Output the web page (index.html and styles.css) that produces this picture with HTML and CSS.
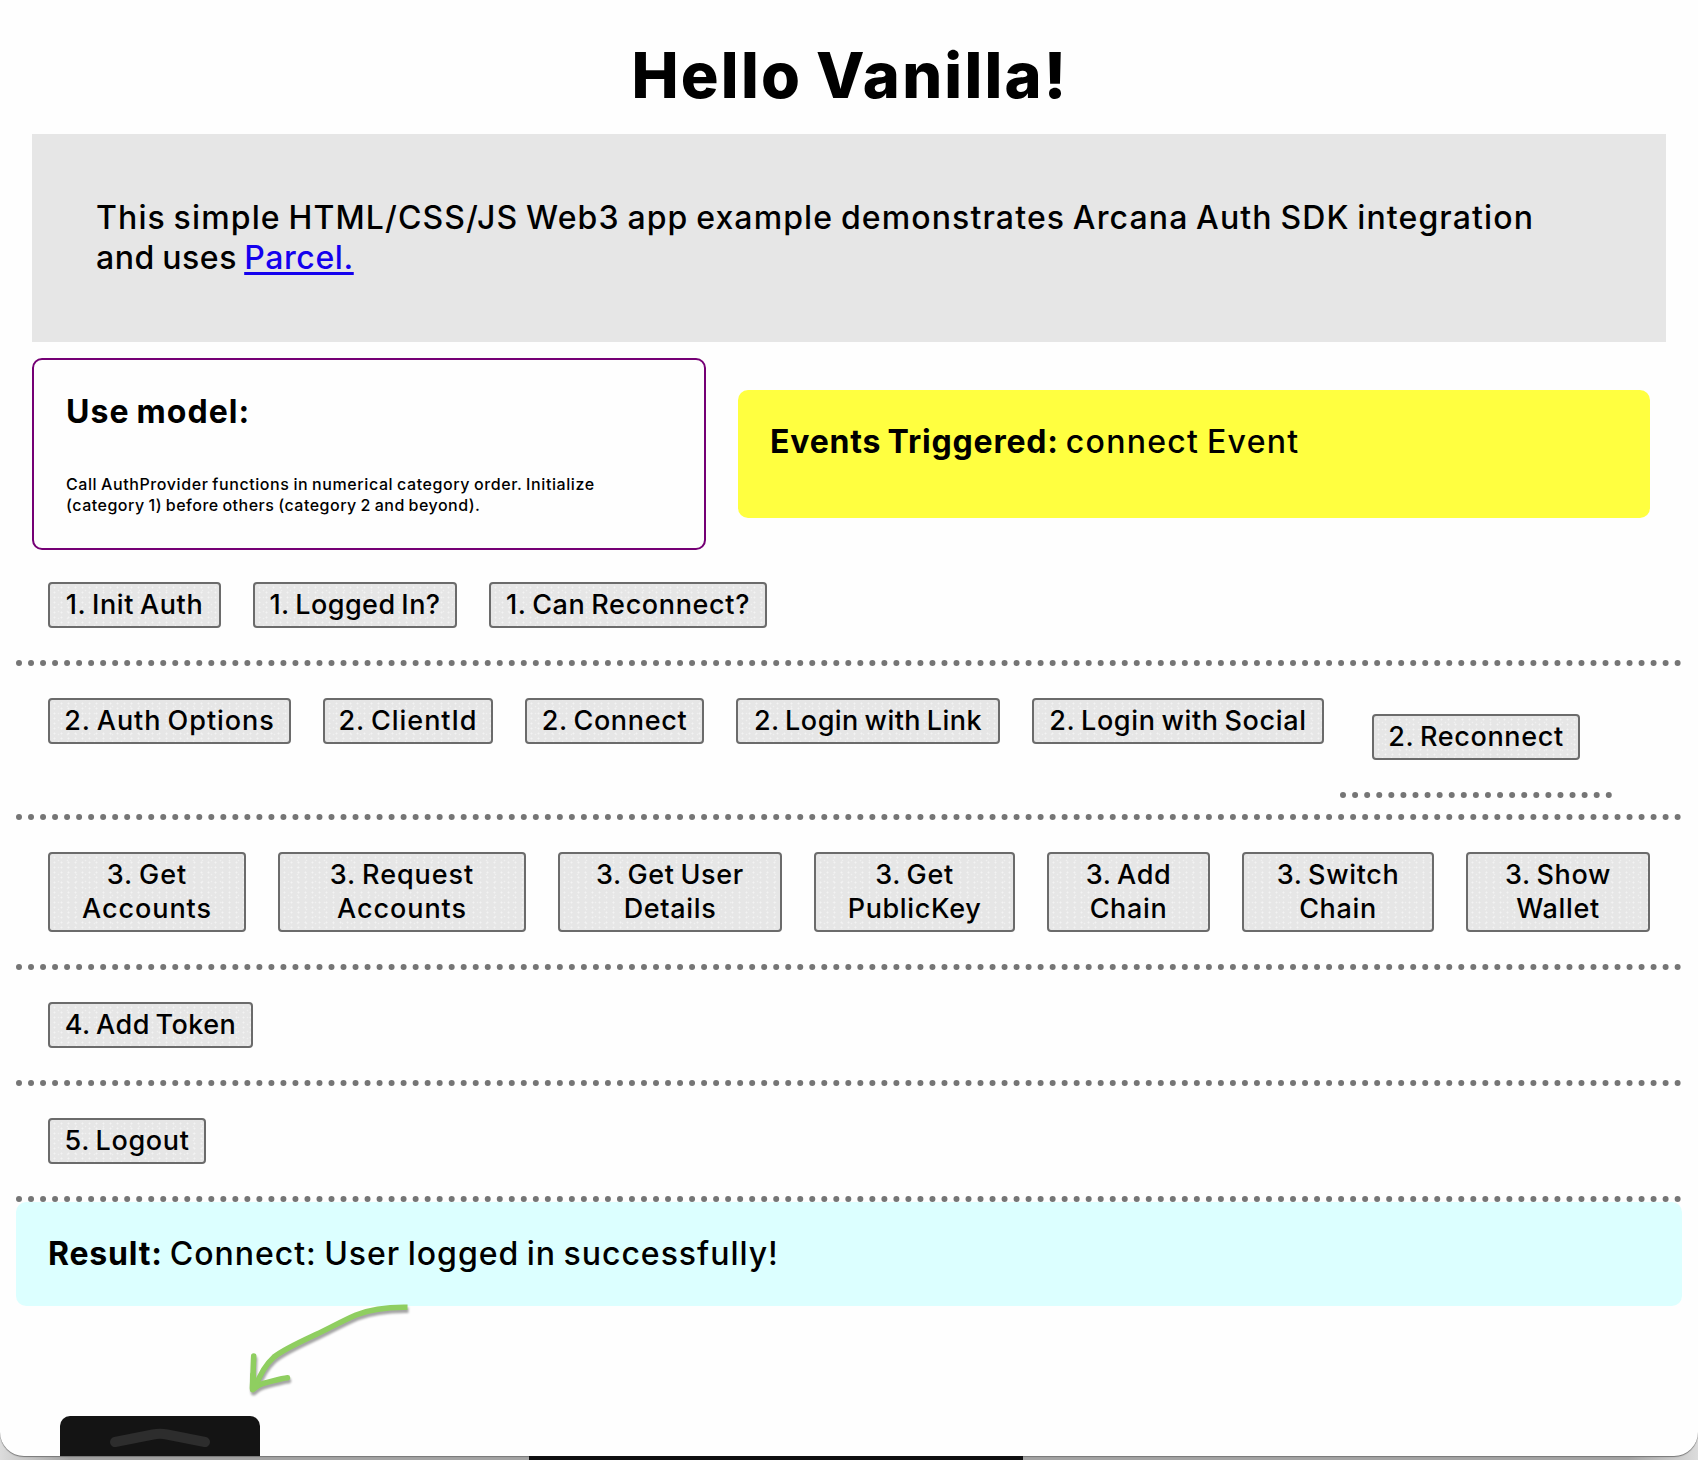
FILE: index.html
```html
<!DOCTYPE html>
<html lang="en">
<head>
<meta charset="utf-8">
<title>Hello Vanilla!</title>
<link rel="stylesheet" href="styles.css">
</head>
<body>
<main class="window">
  <h1 class="title">Hello Vanilla!</h1>
  <p class="intro">This simple HTML/CSS/JS Web3 app example demonstrates Arcana Auth SDK integration<br><span class="intro-end">and uses <a href="#">Parcel.</a></span></p>
  <div class="info">
    <section class="model">
      <h2>Use model:</h2>
      <p>Call AuthProvider functions in numerical category order. Initialize<br><span class="second">(category 1) before others (category 2 and beyond).</span></p>
    </section>
    <section class="events"><b>Events Triggered:</b><span>connect Event</span></section>
  </div>
  <div class="row">
    <button class="w173">1. Init Auth</button>
    <button class="w204 snug">1. Logged In?</button>
    <button class="w278">1. Can Reconnect?</button>
  </div>
  <div class="row row-nested">
    <button class="w243 loose">2. Auth Options</button>
    <button class="w170 loose">2. ClientId</button>
    <button class="w179">2. Connect</button>
    <button class="w264 snug">2. Login with Link</button>
    <button class="w292">2. Login with Social</button>
    <div class="row nested"><button class="w208">2. Reconnect</button></div>
  </div>
  <div class="row">
    <button class="w198 loose">3. Get<br>Accounts</button>
    <button class="w248 loose">3. Request<br>Accounts</button>
    <button class="w224">3. Get User<br>Details</button>
    <button class="w201">3. Get<br>PublicKey</button>
    <button class="w163">3. Add<br>Chain</button>
    <button class="w192">3. Switch<br>Chain</button>
    <button class="w184">3. Show<br>Wallet</button>
  </div>
  <div class="row"><button class="w205 snug">4. Add Token</button></div>
  <div class="row"><button class="w158">5. Logout</button></div>
  <section class="result"><b>Result:</b><span>Connect: User logged in successfully!</span></section>
  <svg class="arrow" width="190" height="120" viewBox="230 1290 190 120" fill="none" stroke="#8fce60" stroke-linecap="round" stroke-linejoin="round">
    <path stroke-width="5.500" stroke-linecap="butt" d="M407.500 1307.300C389 1307 370 1309.500 356 1315C342 1321 329 1328.500 317 1334C301 1341.500 284 1349 274 1357C264 1366 259 1377 255.500 1387"/>
    <path stroke-width="5.500" d="M253.700 1356L252.500 1388L263 1383.500C272 1381.500 280 1378.500 287.500 1377.700"/>
    <path stroke-width="6" d="M253 1375L252.800 1389.500L257 1386"/>
  </svg>
  <div class="wallet-tab">
    <svg width="120" height="30" viewBox="0 0 120 30" fill="none" stroke="#2d2d2d" stroke-width="10" stroke-linecap="round" stroke-linejoin="round"><path d="M15 16L53 8.500Q60 7 67 8.500L105 16"/></svg>
  </div>
</main>
<div class="dock"></div>
</body>
</html>
```
FILE: styles.css
```css
* { box-sizing: border-box; }
html { background: #a3a3a3; }
body {
  margin: 0;
  height: 1460px;
  overflow: hidden;
  font: 450 32px/40px Inter, "Liberation Sans", sans-serif;
  word-spacing: -2px;
  color: #000;
  background: linear-gradient(90deg, #dcdcdc 0, #a3a3a3 70px, #a3a3a3 1628px, #dcdcdc 100%);
}
.window {
  position: relative;
  height: 1456px;
  padding: 0 16px;
  background: #fefefe;
  border-radius: 0 0 24px 24px;
  box-shadow: 0 1px 1px #777;
}
h1, h2, p { margin: 0; }
.title {
  height: 134px;
  padding: 35px 0 0 2px;
  font-size: 63px;
  line-height: 80px;
  font-weight: 800;
  letter-spacing: 2.2px;
  text-align: center;
}
.intro {
  height: 208px;
  margin: 0 16px 16px;
  padding: 64px 0 0 64px;
  background: #e6e6e6;
  letter-spacing: 1.13px;
  white-space: nowrap;
}
.intro-end { letter-spacing: .6px; }
.intro a { color: #1400ee; text-decoration-thickness: 3px; text-underline-offset: 3px; }
.info { display: flex; align-items: center; gap: 32px; margin: 0 32px 0 16px; height: 192px; }
.model {
  width: 674px;
  height: 192px;
  padding: 32px;
  border: 2px solid #750075;
  border-radius: 10px;
}
.model h2 { font-size: 32px; letter-spacing: 1.1px; margin-bottom: 42px; }
.model p { font-size: 16px; line-height: 21px; letter-spacing: .59px; word-spacing: -1px; white-space: nowrap; }
.model .second { letter-spacing: .5px; }
.events { flex: 1; height: 128px; padding: 32px; background: #ffff40; border-radius: 10px; }
.events b { letter-spacing: .8px; margin-right: 7px; }
.events span { letter-spacing: 1.28px; }
.row { display: flex; align-items: flex-start; gap: 32px; padding: 32px; border-bottom: 6px dotted #757575; }
.row-nested { padding-bottom: 16px; }
.nested { margin: -16px 0 0 -16px; }
button {
  flex: none;
  padding: 4px 0;
  border: 2px solid #6b6b6b;
  border-radius: 4px;
  background-color: #e6e6e6;
  background-image:
    radial-gradient(circle, #f3f3f3 .8px, transparent 1.2px),
    radial-gradient(circle, #f0f0f0 .7px, transparent 1.1px);
  background-size: 7px 5px, 9px 7px;
  background-position: 1px 1px, 4px 3px;
  color: #000;
  font: 450 27px/34px Inter, "Liberation Sans", sans-serif;
  letter-spacing: .65px;
  word-spacing: -2px;
  white-space: nowrap;
}
.snug { letter-spacing: .48px; }
.loose { letter-spacing: .95px; }
.nested { gap: 0; }
.w158 { width: 158px; }
.w163 { width: 163px; }
.w170 { width: 170px; }
.w173 { width: 173px; }
.w179 { width: 179px; }
.w184 { width: 184px; }
.w192 { width: 192px; }
.w198 { width: 198px; }
.w201 { width: 201px; }
.w204 { width: 204px; }
.w205 { width: 205px; }
.w208 { width: 208px; }
.w224 { width: 224px; }
.w243 { width: 243px; }
.w248 { width: 248px; }
.w264 { width: 264px; }
.w278 { width: 278px; }
.w292 { width: 292px; }
.result { height: 104px; padding: 32px; background: #dcffff; border-radius: 10px; }
.result b { letter-spacing: .8px; margin-right: 7px; }
.result span { letter-spacing: .98px; }
/* callout drawn over the result panel and the wallet tab */
.arrow { position: absolute; left: 230px; top: 1290px; filter: drop-shadow(1px 3px 1px rgba(0, 0, 0, .35)); }
.wallet-tab {
  position: absolute;
  left: 60px;
  bottom: 0;
  display: flex;
  justify-content: center;
  width: 200px;
  height: 40px;
  padding-top: 10px;
  background: #141414;
  border-radius: 10px 10px 0 0;
}
.dock { position: relative; width: 494px; height: 4px; margin-left: 529px; background: #0e0e10; }
```
